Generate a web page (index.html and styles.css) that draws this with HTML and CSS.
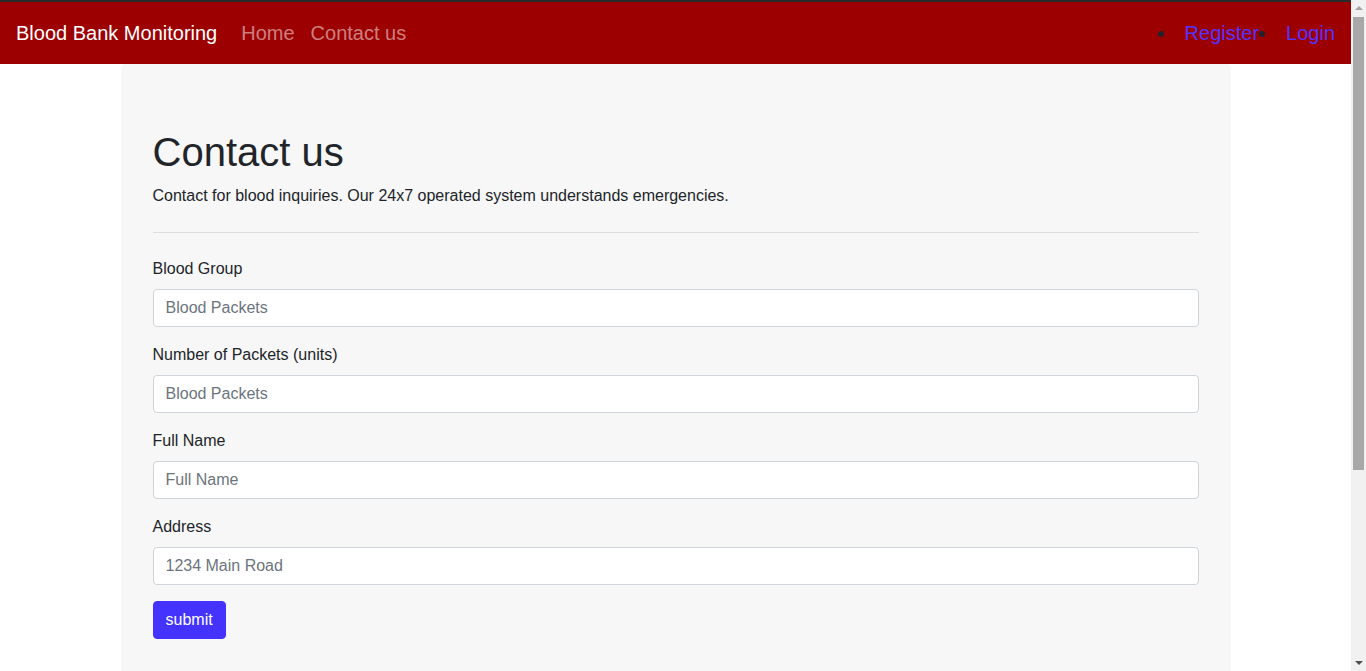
FILE: index.html
```html
<!DOCTYPE html>
<html lang="en">
<head>
<meta charset="utf-8">
<title>Contact us - Blood Bank Monitoring</title>
<link rel="stylesheet" href="styles.css">
</head>
<body>
<nav class="navbar">
  <a class="brand" href="#">Blood Bank Monitoring</a>
  <ul class="nav-main">
    <li><a href="#">Home</a></li>
    <li><a href="#">Contact us</a></li>
  </ul>
  <ul class="nav-auth">
    <li><a href="#">Register</a></li>
    <li><a href="#">Login</a></li>
  </ul>
</nav>
<main class="page">
  <section class="jumbotron">
    <h1>Contact us</h1>
    <p>Contact for blood inquiries. Our 24x7 operated system understands emergencies.</p>
    <hr>
    <form class="form">
      <div class="group">
        <label for="bg">Blood Group</label>
        <input id="bg" type="text" placeholder="Blood Packets">
      </div>
      <div class="group">
        <label for="np">Number of Packets (units)</label>
        <input id="np" type="text" placeholder="Blood Packets">
      </div>
      <div class="group">
        <label for="fn">Full Name</label>
        <input id="fn" type="text" placeholder="Full Name">
      </div>
      <div class="group">
        <label for="ad">Address</label>
        <input id="ad" type="text" placeholder="1234 Main Road">
      </div>
      <button type="button" class="btn">submit</button>
    </form>
  </section>
</main>
<div class="scrollbar" aria-hidden="true">
  <span class="arrow up"></span>
  <span class="thumb"></span>
  <span class="arrow down"></span>
</div>
</body>
</html>
```
FILE: styles.css
```css
* { box-sizing: border-box; }
html, body { margin: 0; padding: 0; }
body {
  font-family: "Liberation Sans", Arial, sans-serif;
  font-size: 16px;
  line-height: 1.5;
  color: #212529;
  background: #fff;
  width: 1351px;
}
.navbar {
  height: 64px;
  border-top: 2px solid #2a2a2a;
  background: #9c0000;
  display: flex;
  align-items: center;
  padding: 0 16px;
}
.brand {
  color: #fff;
  font-size: 20px;
  text-decoration: none;
  margin-right: 16px;
  line-height: 30px;
}
.nav-main {
  list-style: none;
  margin: 0;
  padding: 0;
  display: flex;
}
.nav-main a {
  display: block;
  padding: 0 8px;
  font-size: 20px;
  line-height: 30px;
  color: rgba(255, 255, 255, 0.5);
  text-decoration: none;
}
.nav-auth {
  list-style: none;
  margin: 0 0 0 auto;
  padding: 0;
  display: flex;
}
.nav-auth li {
  display: flex;
  align-items: center;
}
.nav-auth li::before {
  content: "";
  width: 6px;
  height: 6px;
  border-radius: 50%;
  background: #212529;
  margin-right: 21px;
  margin-top: 2px;
}
.nav-auth a {
  font-size: 20px;
  line-height: 30px;
  color: #5533ff;
  text-decoration: none;
}
.page {
  padding-bottom: 240px;
}
.jumbotron {
  width: 1110px;
  margin: 0 auto;
  background: #f7f7f7;
  border-radius: 4.8px;
  padding: 64px 32px;
}
h1 {
  margin: 0 0 8px;
  font-size: 40px;
  font-weight: 400;
  line-height: 1.2;
}
p { margin: 0 0 16px; }
hr {
  margin: 24px 0;
  border: 0;
  border-top: 1px solid rgba(0, 0, 0, 0.1);
}
.group { margin-bottom: 16px; }
label {
  display: inline-block;
  margin-bottom: 8px;
}
input {
  display: block;
  width: 100%;
  height: 38px;
  padding: 6px 12px;
  font-family: inherit;
  font-size: 16px;
  line-height: 1.5;
  color: #495057;
  background: #fff;
  border: 1px solid #ced4da;
  border-radius: 4px;
}
input::placeholder { color: #6c757d; opacity: 1; }
.btn {
  display: inline-block;
  height: 38px;
  padding: 6px 12px;
  font-family: inherit;
  font-size: 16px;
  line-height: 1.5;
  color: #fff;
  background: #4433ff;
  border: 1px solid #4433ff;
  border-radius: 4px;
  cursor: pointer;
}
.scrollbar {
  position: fixed;
  top: 0;
  right: 0;
  width: 15px;
  height: 100vh;
  background: #f1f1f1;
  display: flex;
  flex-direction: column;
  align-items: center;
}
.arrow {
  width: 0;
  height: 0;
  border-left: 4px solid transparent;
  border-right: 4px solid transparent;
  flex: none;
}
.arrow.up {
  margin-top: 6px;
  border-bottom: 4px solid #a3a3a3;
}
.arrow.down {
  margin-top: auto;
  margin-bottom: 6px;
  border-top: 4px solid #505050;
}
.thumb {
  width: 11px;
  height: 453px;
  margin-top: 7px;
  background: #a8a8a8;
}
```
